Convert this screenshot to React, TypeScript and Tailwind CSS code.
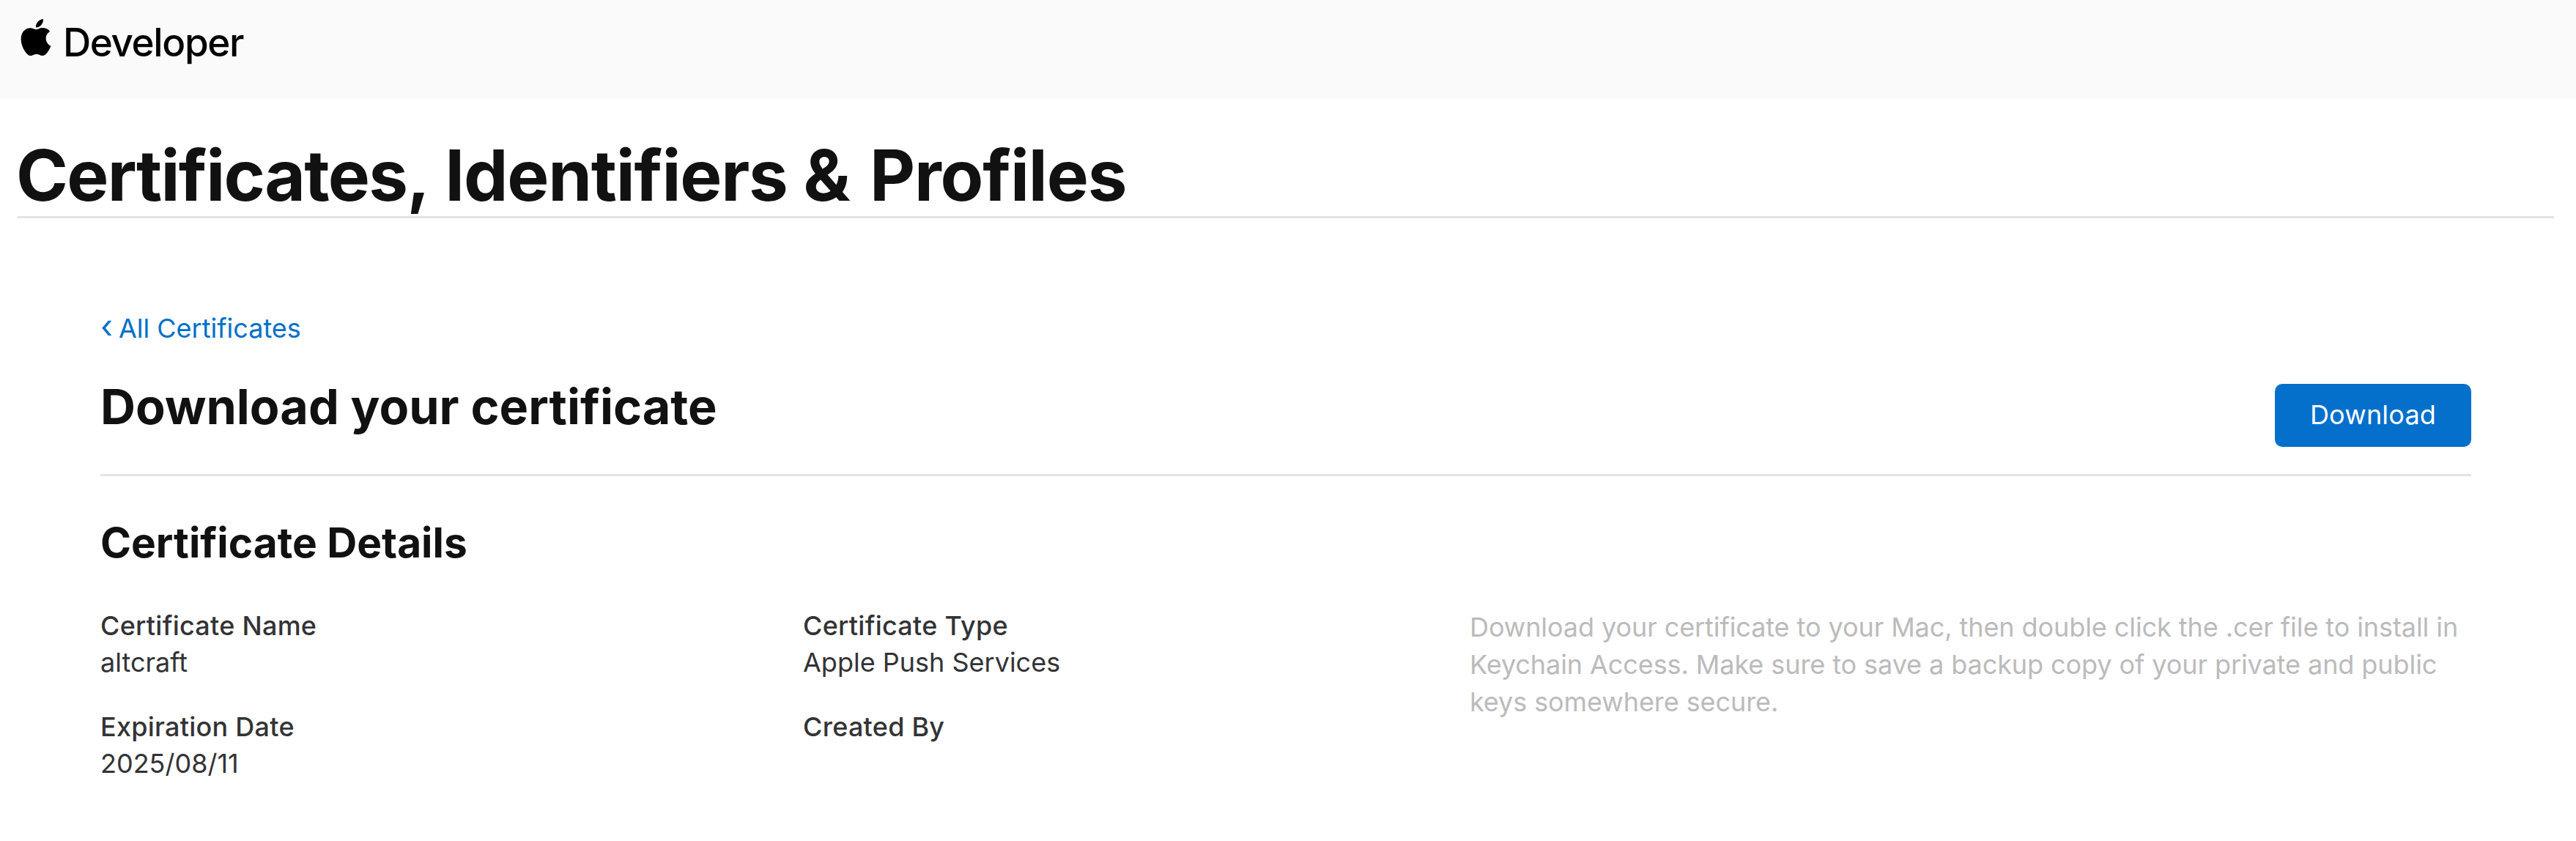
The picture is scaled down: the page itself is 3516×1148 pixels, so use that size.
import React from 'react';
import { SiApple } from 'react-icons/si';

const Field = ({ label, value }: { label: string; value?: string }) => (
  <div className="h-[138px]">
    <div className="h-[50px] text-[36px] leading-[50px] font-medium tracking-[0.25px] text-[#333336]">{label}</div>
    {value && <div className="h-[50px] text-[36px] leading-[50px] text-[#333336]">{value}</div>}
  </div>
);

const App: React.FC = () => {
  return (
    <div className="min-h-[1148px] bg-white font-['Inter',sans-serif] text-[#111111]">
      <header className="flex h-[136px] items-start bg-[#fafafa] pl-[24px] pt-[24px]">
        <SiApple className="h-[54px] w-[50px] text-black" />
        <span className="ml-[12px] text-[53px] leading-[68px] font-medium tracking-[-1.4px] text-black">Developer</span>
      </header>

      <div className="ml-[24px] mr-[30px] h-[162px] border-b-[3px] border-[#e3e3e3]">
        <h1 className="ml-[-2px] pt-[53px] text-[96px] leading-[100px] font-bold tracking-[-1.2px]">
          <span className="tracking-[-1.7px]">Certificates,</span> Identifiers <span className="[word-spacing:6px]">&amp; Profiles</span>
        </h1>
      </div>

      <main className="pl-[137px] pr-[143px] pt-[122px]">
        <a className="block h-[50px] text-[36px] leading-[50px] text-[#0070c9]">
          <span className="mr-[8px] text-[44px]">‹</span>All Certificates
        </a>

        <div className="flex h-[180px] items-start justify-between border-b-[3px] border-[#e3e3e3]">
          <h2 className="pt-[47px] text-[66.5px] leading-[76px] font-bold">Download your certificate</h2>
          <button className="mt-[54px] h-[86px] w-[268px] rounded-[10px] bg-[#0470cc] pb-[2px] text-[36px] tracking-[0.2px] text-white">Download</button>
        </div>

        <h3 className="pt-[58px] text-[56.8px] leading-[66px] font-bold">Certificate Details</h3>

        <div className="mt-[55px] grid grid-cols-[959px_910px_1fr]">
          <div>
            <Field label="Certificate Name" value="altcraft" />
            <Field label="Expiration Date" value="2025/08/11" />
          </div>
          <div>
            <Field label="Certificate Type" value="Apple Push Services" />
            <Field label="Created By" />
          </div>
          <p className="pt-[2px] text-[36px] leading-[51px] tracking-[-0.08px] text-[#bbbbbb]">
            Download your certificate to your Mac, then double click the .cer file to install in Keychain Access. Make sure to save a backup copy of your private and public keys somewhere secure.
          </p>
        </div>
      </main>
    </div>
  );
};

export default App;
